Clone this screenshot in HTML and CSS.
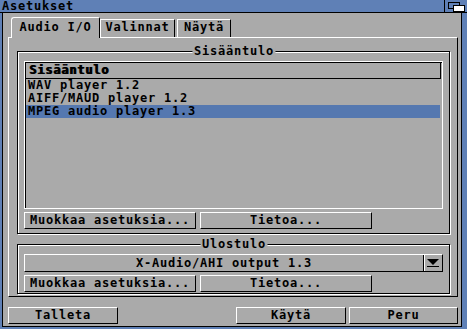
FILE: index.html
```html
<!DOCTYPE html>
<html lang="fi">
<head>
    <meta charset="UTF-8">
    <title>Asetukset</title>
    <link rel="stylesheet" href="styles.css">
</head>
<body>
    <div class="win">
        <div class="titlebar">
            <span class="title">Asetukset</span>
            <span class="depth">
                <svg width="22" height="12" viewBox="0 0 22 12">
                    <rect x="3.5" y="2.5" width="11" height="6" fill="none" stroke="#000"/>
                    <rect x="8.5" y="5.5" width="11" height="6" fill="#fff" stroke="#000"/>
                </svg>
            </span>
        </div>
        <div class="body">
            <div class="inner">
                <div class="tabs">
                    <div class="tab tab-active">Audio I/O</div>
                    <div class="tab tab-valinnat">Valinnat</div>
                    <div class="tab tab-nayta">Näytä</div>
                </div>

                <div class="panel">
                    <div class="group group-in">
                        <span class="legend">Sisääntulo</span>
                        <div class="list">
                            <div class="list-head">Sisääntulo</div>
                            <div class="row">WAV player 1.2</div>
                            <div class="row">AIFF/MAUD player 1.2</div>
                            <div class="row selected">MPEG audio player 1.3</div>
                        </div>
                        <div class="btnrow">
                            <button class="btn btn-wide">Muokkaa asetuksia...</button>
                            <button class="btn btn-wide">Tietoa...</button>
                        </div>
                    </div>

                    <div class="group group-out">
                        <span class="legend">Ulostulo</span>
                        <div class="cycle">
                            <span class="cycle-label">X-Audio/AHI output 1.3</span>
                            <span class="cycle-arrow">
                                <svg width="18" height="16" viewBox="0 0 18 16">
                                    <polygon points="3,4 15,4 9,10" fill="#000"/>
                                    <rect x="3" y="11" width="12" height="1" fill="#000"/>
                                </svg>
                            </span>
                        </div>
                        <div class="btnrow">
                            <button class="btn btn-wide">Muokkaa asetuksia...</button>
                            <button class="btn btn-wide">Tietoa...</button>
                        </div>
                    </div>
                </div>

                <div class="actions">
                    <button class="btn btn-action">Talleta</button>
                    <div class="actions-right">
                        <button class="btn btn-action">Käytä</button>
                        <button class="btn btn-action btn-peru">Peru</button>
                    </div>
                </div>
            </div>
        </div>
    </div>
</body>
</html>
```

FILE: styles.css
```css
* {
    box-sizing: border-box;
}
body {
    margin: 0;
    width: 467px;
    height: 329px;
    overflow: hidden;
    background: #aaaaaa;
    color: #000;
    font-family: "DejaVu Sans Mono", monospace;
    font-weight: bold;
    font-size: 12px;
    letter-spacing: 0.78px;
}
.win {
    display: flex;
    flex-direction: column;
    height: 329px;
}

/* title bar */
.titlebar {
    display: flex;
    height: 13px;
    background: #5f80b6;
    border-bottom: 1px solid #000;
}
.title {
    flex: 1;
    padding-left: 2px;
    line-height: 12px;
}
.depth {
    width: 23px;
    border-left: 1px solid #000;
}
.depth svg {
    display: block;
}

/* window frame */
.body {
    flex: 1;
    display: flex;
    flex-direction: column;
    border-style: solid;
    border-color: #5f80b6;
    border-width: 0 5px 2px 2px;
}
.inner {
    flex: 1;
    display: flex;
    flex-direction: column;
    border: 1px solid #000;
    border-top: 0;
    padding: 0 3px 0 5px;
}

/* tabs */
.tabs {
    display: flex;
    align-items: flex-end;
    height: 24px;
    padding-left: 3px;
}
.tab {
    height: 18px;
    border: 1px solid;
    border-color: #fff #000 transparent #fff;
    border-bottom: 0;
    text-align: center;
    line-height: 12px;
    padding-top: 1px;
}
.tab-active {
    position: relative;
    z-index: 1;
    width: 89px;
    height: 21px;
    margin-bottom: -1px;
    padding-top: 3px;
    background: #aaaaaa;
    border-radius: 3px 2px 0 0;
}
.tab-valinnat {
    width: 75px;
}
.tab-nayta {
    width: 54px;
    margin-left: 2px;
}

/* register panel */
.panel {
    height: 260px;
    border: 1px solid;
    border-color: #fff #000 #000 #fff;
    display: flex;
    flex-direction: column;
}
.group {
    position: relative;
    margin: 0 7px 0 8px;
    border: 1px solid #000;
    box-shadow: inset 1px 1px 0 #fff, 1px 1px 0 #fff;
    padding: 0 6px 0 6px;
}
.group-in {
    margin-top: 13px;
    height: 183px;
    padding-top: 9px;
}
.group-out {
    margin-top: 10px;
    height: 50px;
    padding-top: 9px;
}
.legend {
    position: absolute;
    top: -7px;
    left: 50%;
    transform: translateX(-50%);
    padding: 0 1px 0 2px;
    background: #aaaaaa;
    line-height: 12px;
    white-space: nowrap;
}

/* list */
.list {
    height: 148px;
    width: 419px;
    border: 1px solid #fff;
    box-shadow: inset 1px 1px 0 #000;
}
.list-head {
    height: 17px;
    margin-right: 1px;
    border: 1px solid #000;
    padding-left: 3px;
    line-height: 15px;
    text-shadow: 1px 0 0 #000;
}
.row {
    height: 13px;
    margin: 0 2px 0 1px;
    padding-left: 2px;
    line-height: 13px;
    white-space: nowrap;
}
.row.selected {
    background: #5578b0;
}

/* buttons */
.btn {
    display: block;
    height: 17px;
    margin: 0;
    padding: 0;
    border: 1px solid;
    border-color: #fff #000 #000 #fff;
    background: #aaaaaa;
    color: #000;
    font: inherit;
    letter-spacing: inherit;
    line-height: 15px;
    text-align: center;
    white-space: nowrap;
}
.btnrow {
    display: flex;
    gap: 4px;
    margin-top: 3px;
}
.btn-wide {
    width: 172px;
}

/* cycle gadget */
.cycle {
    display: flex;
    width: 419px;
    height: 18px;
    border: 1px solid;
    border-color: #fff #000 #000 #fff;
}
.cycle-label {
    flex: 1;
    text-align: center;
    line-height: 16px;
}
.cycle-arrow {
    width: 19px;
    border-left: 1px solid #000;
    box-shadow: inset 1px 0 0 #fff;
}
.cycle-arrow svg {
    display: block;
}

/* bottom row */
.actions {
    display: flex;
    justify-content: space-between;
    margin-top: 10px;
}
.actions-right {
    display: flex;
    gap: 3px;
}
.btn-action {
    width: 110px;
}
.btn-peru {
    width: 109px;
}
```
